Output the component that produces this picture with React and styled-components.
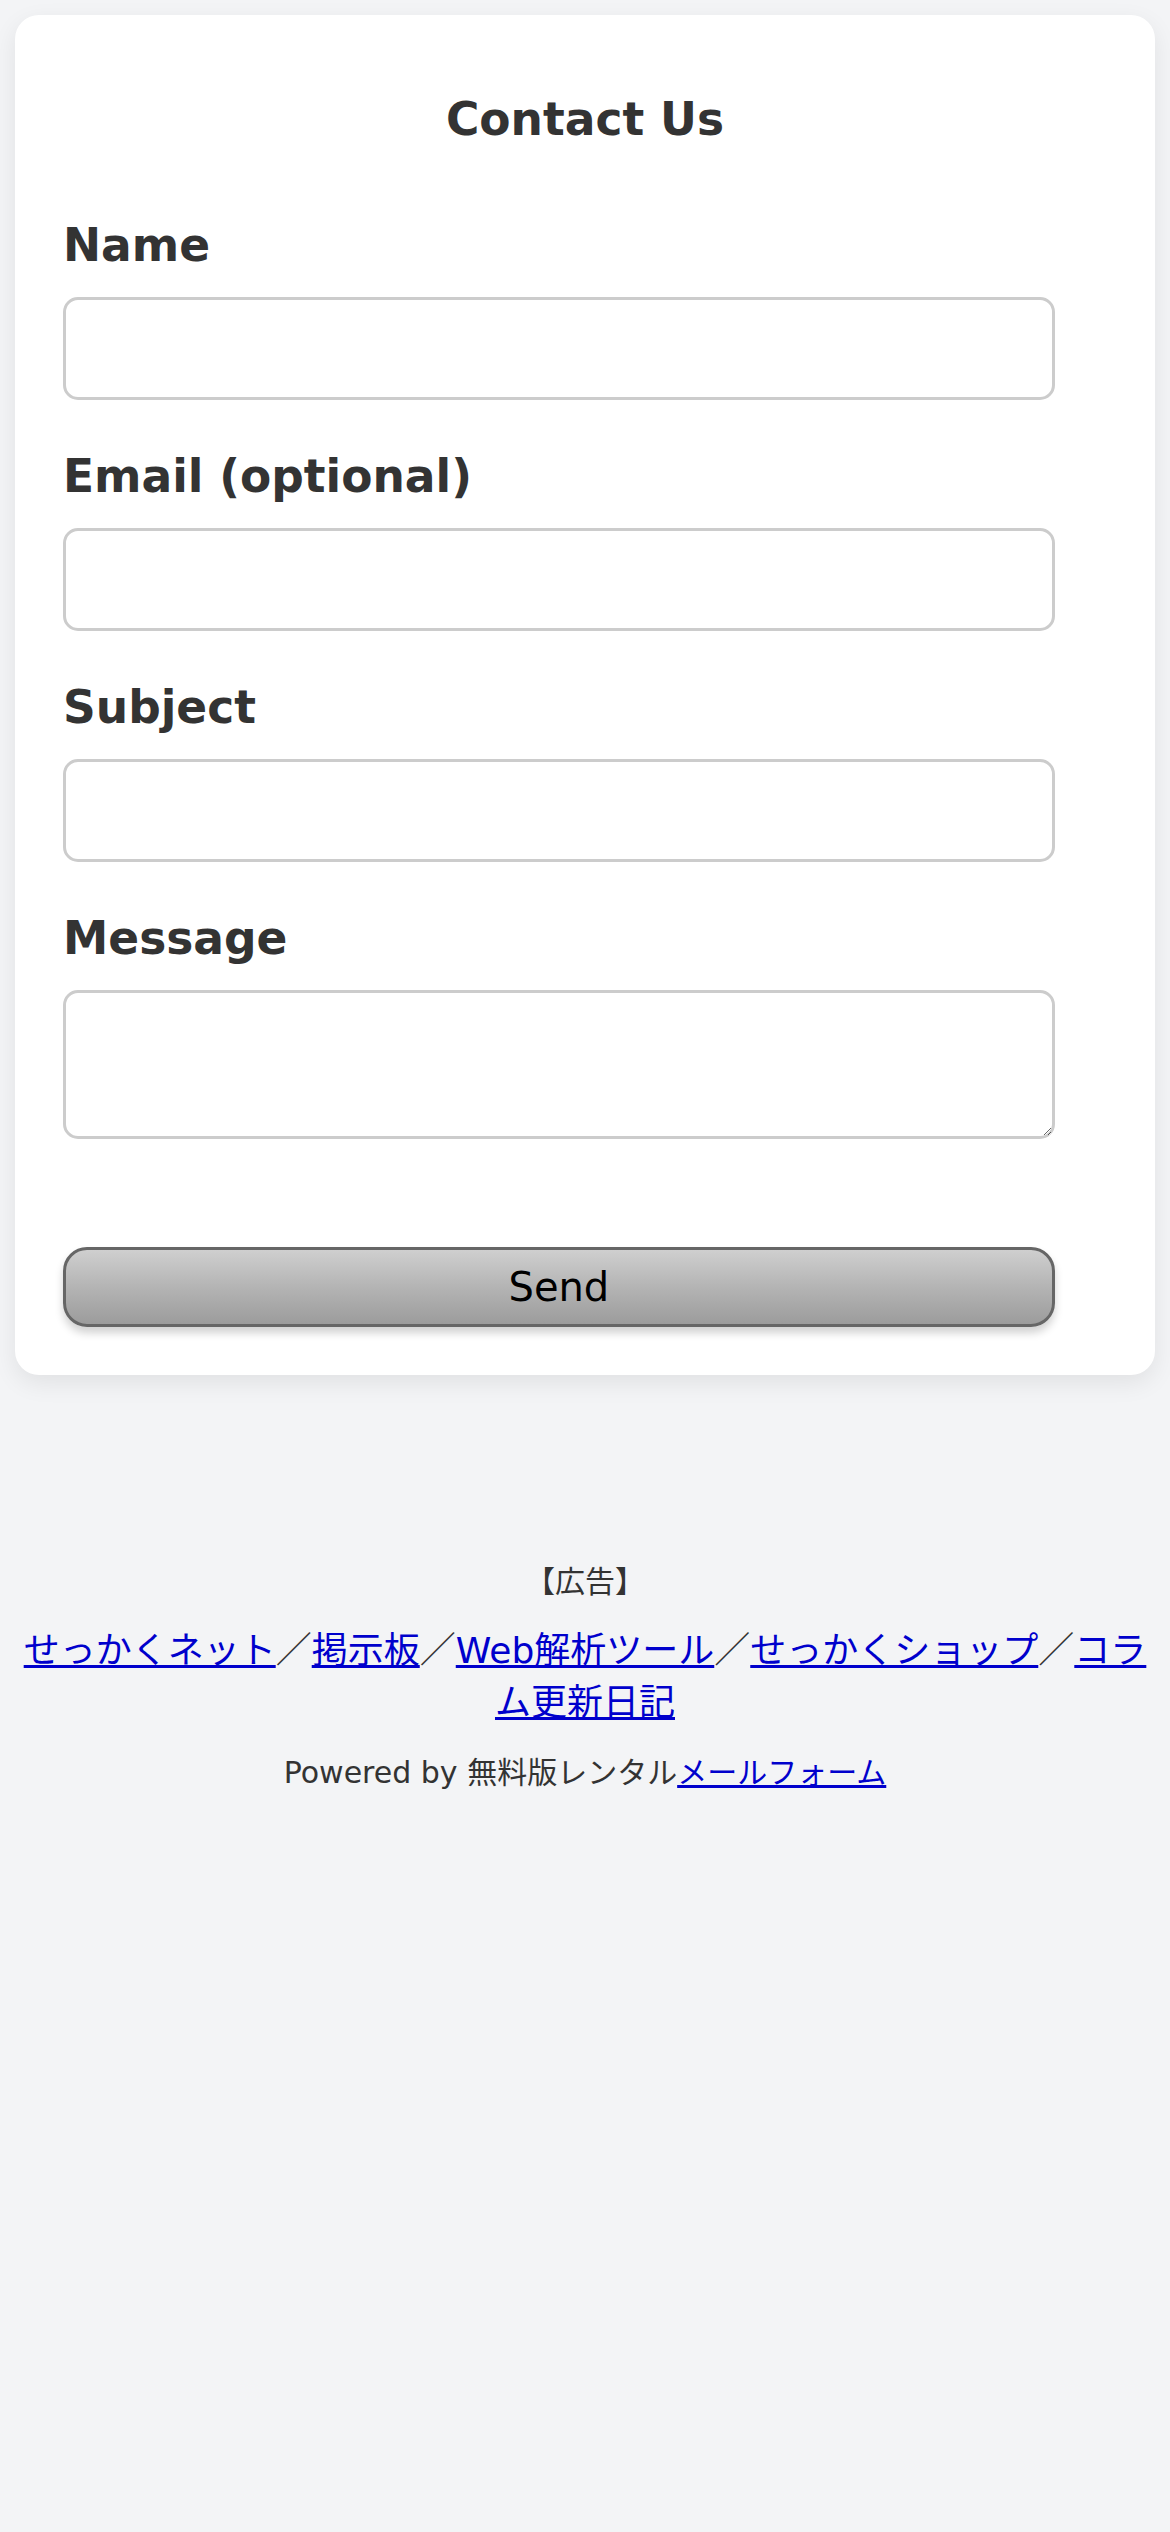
import React from "react";
import styled, { createGlobalStyle } from "styled-components";

const GlobalStyle = createGlobalStyle`
  html, body {
    margin: 0;
    padding: 0;
    background: #f3f4f6;
  }
  body {
    font-family: "DejaVu Sans", "Noto Sans CJK JP", sans-serif;
    color: #333;
  }
  * { box-sizing: border-box; }
`;

const Page = styled.div`
  padding: 15px 15px 0;
  min-height: 2532px;
  background: #f3f4f6;
`;

const Card = styled.form`
  background: #fff;
  border-radius: 24px;
  box-shadow: 0 8px 24px rgba(0, 0, 0, 0.08);
  padding: 78px 48px 48px;
`;

const Title = styled.h2`
  margin: 0 0 73px;
  font-size: 45.5px;
  font-weight: bold;
  text-align: center;
  color: #333;
  line-height: normal;
`;

const Field = styled.div`
  display: flex;
  flex-direction: column;
  gap: 25px;
  margin-bottom: ${(p) => (p.$last ? "108px" : "50px")};
`;

const Label = styled.label`
  font-size: 45.5px;
  font-weight: bold;
  color: #333;
  line-height: normal;
`;

const Input = styled.input`
  width: 95%;
  height: 103px;
  border: 3px solid #ccc;
  border-radius: 15px;
  background: #fff;
  font-size: 45px;
  padding: 0 15px;
  font-family: inherit;
  outline: none;
`;

const TextArea = styled.textarea`
  width: 95%;
  height: 149px;
  border: 3px solid #ccc;
  border-radius: 15px;
  background: #fff;
  font-size: 45px;
  padding: 15px;
  font-family: inherit;
  outline: none;
  display: block;
`;

const SendButton = styled.button`
  display: block;
  width: 95%;
  height: 80px;
  border: 3px solid #666;
  border-radius: 24px;
  background: linear-gradient(to bottom, #cfcfcf 0%, #b4b4b4 50%, #9c9c9c 100%);
  box-shadow: 0 6px 9px rgba(0, 0, 0, 0.18);
  font-family: "DejaVu Sans", sans-serif;
  font-size: 40px;
  color: #000;
  padding: 0;
  cursor: pointer;
`;

const Footer = styled.footer`
  margin-top: 182px;
  text-align: center;
  display: flex;
  flex-direction: column;
`;

const SmallLine = styled.div`
  font-size: 30px;
  color: #333;
  line-height: normal;
`;

const LinkLine = styled.div`
  font-size: 36px;
  color: #333;
  line-height: normal;
  margin: 20px 0 23px;
`;

const Link = styled.a`
  color: #0000cc;
  text-decoration: underline;
`;

const fields = [
  { label: "Name", id: "name" },
  { label: "Email (optional)", id: "email" },
  { label: "Subject", id: "subject" },
];

const links = [
  "せっかくネット",
  "掲示板",
  "Web解析ツール",
  "せっかくショップ",
  "コラム更新日記",
];

export default function App() {
  return (
    <>
      <GlobalStyle />
      <Page>
        <Card onSubmit={(e) => e.preventDefault()}>
          <Title>Contact Us</Title>
          {fields.map((f) => (
            <Field key={f.id}>
              <Label htmlFor={f.id}>{f.label}</Label>
              <Input id={f.id} type="text" />
            </Field>
          ))}
          <Field $last>
            <Label htmlFor="message">Message</Label>
            <TextArea id="message" />
          </Field>
          <SendButton type="submit">Send</SendButton>
        </Card>
        <Footer>
          <SmallLine>【広告】</SmallLine>
          <LinkLine>
            {links.map((l, i) => (
              <React.Fragment key={l}>
                {i > 0 && "／"}
                <Link href="#">{l}</Link>
              </React.Fragment>
            ))}
          </LinkLine>
          <SmallLine>
            Powered by 無料版レンタル<Link href="#">メールフォーム</Link>
          </SmallLine>
        </Footer>
      </Page>
    </>
  );
}
